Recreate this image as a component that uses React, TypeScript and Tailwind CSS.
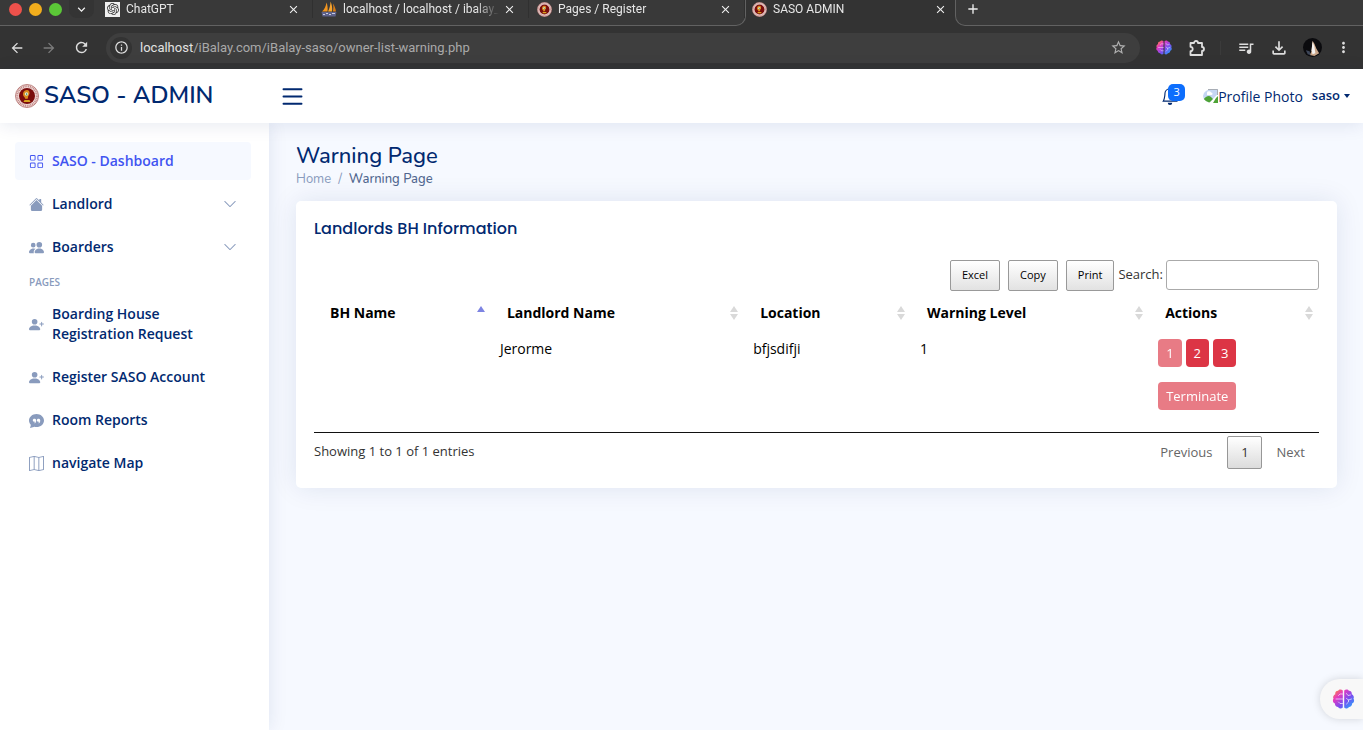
import React from "react";
import {
  BsBell,
  BsChatQuoteFill,
  BsChevronDown,
  BsGrid,
  BsHouseFill,
  BsList,
  BsMap,
  BsPeopleFill,
  BsPersonPlusFill,
} from "react-icons/bs";
import {
  MdAdd,
  MdArrowBack,
  MdArrowForward,
  MdClose,
  MdInfoOutline,
  MdKeyboardArrowDown,
  MdMoreVert,
  MdOutlineFileDownload,
  MdQueueMusic,
  MdRefresh,
  MdStarBorder,
} from "react-icons/md";
import { SiOpenai } from "react-icons/si";

function Seal({ className }: { className: string }) {
  return (
    <svg viewBox="0 0 48 48" className={className} aria-hidden="true">
      <circle cx="24" cy="24" r="23" fill="#f3dcda" stroke="#a8605d" strokeWidth="1.5" />
      <circle cx="24" cy="24" r="19.5" fill="none" stroke="#c08a88" strokeWidth="4" strokeDasharray="2 1.6" />
      <circle cx="24" cy="24" r="16" fill="#7a0c0c" />
      <path d="M20 13c5-3 10 0 9 6-1 5-4 5-3 10l-5 1c-1-4-5-5-5-9 0-4 1-6 4-8z" fill="#d98a1e" />
      <path d="M19 32h10l2 4H17z" fill="#d9a321" />
      <circle cx="23" cy="20" r="3.5" fill="#dfe9d8" />
      <path d="M22 18l3 2-2 3z" fill="#2f8a54" />
    </svg>
  );
}

function SailLogo() {
  return (
    <svg viewBox="0 0 16 16" className="size-4 shrink-0" aria-hidden="true">
      <path d="M5.500 1.500C6.500 4 7 7 6.500 10.500H1C3.500 8.500 5 5 5.500 1.500z" fill="#f0941f" />
      <path d="M9.500 0.500C11 4 11.500 7 11 10.500H7C8.500 7.500 9.500 4 9.500 0.500z" fill="#f7a52e" />
      <path d="M12 2.500c1.500 2 2.500 5 3 8h-3.200C12.500 8 12.500 5 12 2.500z" fill="#d97d16" />
      <path d="M0.500 11h15l-1 4.500h-13z" fill="#5d618a" />
      <path d="M2 13.500h2m1-1h2m1 1h2m1-1h3" stroke="#c9cbe0" strokeWidth="1" />
    </svg>
  );
}

function Puzzle() {
  return (
    <svg viewBox="0 0 18 18" className="size-[18px]" fill="none" stroke="currentColor" strokeWidth="1.8" strokeLinejoin="round" aria-hidden="true">
      <path d="M2.500 4H6a2 2 0 0 1 4 0h4v4a2 2 0 0 1 0 4v4H2.500v-3.800a2.200 2.200 0 0 0 0-4.400z" />
    </svg>
  );
}

function Brain({ id, className }: { id: string; className: string }) {
  return (
    <svg viewBox="0 0 22 20" className={className} aria-hidden="true">
      <defs>
        <linearGradient id={id} x1="0" y1="0" x2="1" y2="1">
          <stop offset="0" stopColor="#ff9a1f" />
          <stop offset="0.300" stopColor="#e63bc0" />
          <stop offset="0.600" stopColor="#7a4df0" />
          <stop offset="1" stopColor="#17b4ff" />
        </linearGradient>
      </defs>
      <path
        fill={`url(#${id})`}
        d="M10.300 1.500C9 0 6.500 0 5.600 1.700 3.600 1.700 2.300 3.500 2.800 5.200 1 6 0 8 1 9.600c-1.200 1.800-.6 4.200 1.400 5 0 2 1.400 3.400 3.200 3.400 1 1.800 3.400 2 4.700.5zM11.700 1.500C13 0 15.500 0 16.400 1.700c2 0 3.300 1.800 2.800 3.500C21 6 22 8 21 9.600c1.200 1.800.6 4.200-1.400 5 0 2-1.400 3.400-3.200 3.400-1 1.800-3.400 2-4.700.5z"
      />
      <path
        fill="none"
        stroke="#fff"
        strokeOpacity="0.700"
        strokeWidth="0.900"
        strokeLinecap="round"
        d="M10 5H7.500L6 6.500M10 10H3.500M10 14.500H7.500L6 13M14 4.500l1.500 2 2.500-.5M14 9.500l2 1.500 3-1M16 11v2l-2 2"
      />
    </svg>
  );
}

function BrokenImage() {
  return (
    <svg viewBox="0 0 15 14" className="h-[14px] w-[15px] shrink-0" aria-hidden="true">
      <defs>
        <clipPath id="avatar-round">
          <rect width="24" height="14" rx="10" ry="7" />
        </clipPath>
      </defs>
      <g clipPath="url(#avatar-round)">
        <path d="M0 0h15v5L6 14H0z" fill="#c5d6f3" />
        <path d="M0 11c3-4 6-5 8-3l2 2-4 4H0z" fill="#4ea336" />
        <path d="M4 4a2 1.500 0 0 1 4-.5 1.500 1.200 0 0 1 0 2.500H4z" fill="#fff" />
        <path d="M15 5l-8 9h8z" fill="#fff" />
        <path d="M13 9l2-2v7h-5z" fill="#4ea336" />
      </g>
      <path d="M5 .5h9.500V6" fill="none" stroke="#a8adb5" />
    </svg>
  );
}

type TabProps = { icon: React.ReactNode; title: string; active?: boolean };

function BrowserTab({ icon, title, active }: TabProps) {
  return (
    <div className={`flex h-[18px] w-[216px] min-w-0 items-center ${active ? "pr-2 pl-[6px]" : "border-r border-[#303030] pr-3 pl-2"}`}>
      {icon}
      <span className="ml-[6px] min-w-0 flex-1 mask-r-from-85% text-[12px] whitespace-nowrap text-[#e6e6e6]">{title}</span>
      <button type="button" aria-label={`Close ${title}`} className="ml-1 text-[#f0f0f0]">
        <MdClose size={13} />
      </button>
    </div>
  );
}

function Browser() {
  return (
    <div className="bg-[#333333] font-[Roboto,sans-serif]">
      <div className="flex h-[26px]">
        <div className="flex min-w-0 rounded-br-[10px] border-r border-b border-[#626262] bg-[#393939]">
          <div className="flex h-[18px] w-[97px] shrink-0 items-center gap-[7px] pl-[9px]">
            <span className="size-[13px] rounded-full bg-[#ed514b]" />
            <span className="size-[13px] rounded-full bg-[#f2ae1d]" />
            <span className="size-[13px] rounded-full bg-[#5bc837]" />
            <button type="button" aria-label="Search tabs" className="flex h-[18px] w-[25px] items-center justify-center rounded-b-lg bg-[#343434] text-[#f0f0f0]">
              <MdKeyboardArrowDown size={15} />
            </button>
          </div>
          <BrowserTab
            title="ChatGPT"
            icon={
              <span className="flex size-[15px] shrink-0 items-center justify-center bg-[#f0f0f0] text-[#333]">
                <SiOpenai size={12} />
              </span>
            }
          />
          <BrowserTab title="localhost / localhost / ibalay_" icon={<SailLogo />} />
          <BrowserTab title="Pages / Register" icon={<Seal className="size-[15px] shrink-0" />} />
        </div>
        <div className="flex w-[209px] shrink-0">
          <BrowserTab active title="SASO ADMIN" icon={<Seal className="size-[15px] shrink-0" />} />
        </div>
        <div className="flex-1 rounded-bl-[10px] border-b border-l border-[#626262] bg-[#393939]">
          <button type="button" aria-label="New tab" className="ml-[9px] flex h-[17px] items-center text-[#f0f0f0]">
            <MdAdd size={16} />
          </button>
        </div>
      </div>
      <div className="flex h-[43px] items-center pr-[11px] pl-2 text-[#dedede]">
        <button type="button" aria-label="Back" className="ml-px"><MdArrowBack size={16} /></button>
        <button type="button" aria-label="Forward" className="ml-4 text-[#7c7c7c]"><MdArrowForward size={16} /></button>
        <button type="button" aria-label="Reload" className="ml-4"><MdRefresh size={17} /></button>
        <div className="ml-4 flex h-[30px] flex-1 items-center rounded-full bg-[#3e3e3e] pr-[13px] pl-[4px]">
          <button type="button" aria-label="Site information" className="flex size-[22px] items-center justify-center rounded-full bg-[#333333]">
            <MdInfoOutline size={15} />
          </button>
          <div className="ml-2 flex-1 text-[13px] text-[#a9a9a9]">
            <span className="text-[#e2e2e2]">localhost</span>/iBalay.com/iBalay-saso/owner-list-warning.php
          </div>
          <button type="button" aria-label="Bookmark this page" className="text-[#b0b0b0]"><MdStarBorder size={17} /></button>
        </div>
        <div className="ml-4 flex items-center">
          <Brain id="brain-toolbar" className="h-[15px] w-4" />
          <button type="button" aria-label="Extensions" className="ml-4"><Puzzle /></button>
          <span className="ml-[14px] h-[14px] w-px bg-[#3b3b3b]" />
          <button type="button" aria-label="Media" className="ml-4"><MdQueueMusic size={18} /></button>
          <button type="button" aria-label="Downloads" className="ml-[14px]"><MdOutlineFileDownload size={20} /></button>
          <svg viewBox="0 0 20 20" className="ml-[14px] size-[19px]" aria-hidden="true">
            <circle cx="10" cy="10" r="10" fill="#0b0b0e" />
            <path d="M10 3l2 3 2 5 3 5-5 3-5-1 2-4z" fill="#c9a588" />
            <path d="M10 4l2 5 1 7-3 1-1-4z" fill="#f4f1ee" />
            <path d="M3 13l4 1 1 4-3-1z" fill="#3d4658" />
          </svg>
          <button type="button" aria-label="Menu" className="ml-[13px]"><MdMoreVert size={17} /></button>
        </div>
      </div>
    </div>
  );
}

function Header() {
  return (
    <header className="relative z-10 flex h-[54px] items-center bg-white pr-[13px] pl-[15px] text-[#012970] shadow-[0_2px_18px_rgba(1,41,112,0.1)]">
      <a href="#" className="flex w-[267px] items-center">
        <Seal className="size-6" />
        <span className="ml-[5px] pb-[2px] font-[Nunito,sans-serif] text-[24px] leading-7 font-semibold whitespace-nowrap">SASO - ADMIN</span>
      </a>
      <button type="button" aria-label="Toggle sidebar" className="-ml-[4px]"><BsList size={29} /></button>
      <div className="ml-auto flex items-center">
        <button type="button" aria-label="3 notifications" className="relative mr-6">
          <BsBell size={18} />
          <span className="absolute -top-[3px] left-[7px] flex h-[17px] w-[17px] items-center justify-center rounded-[5px] bg-[#0d6efd] text-[11px] text-white">3</span>
        </button>
        <button type="button" className="flex items-center">
          <BrokenImage />
          <span className="text-[14px]">Profile Photo</span>
          <span className="ml-[9px] text-[13px] font-semibold">saso</span>
          <span className="ml-1 border-x-[3px] border-t-[4px] border-x-transparent border-t-[#012970]" />
        </button>
      </div>
    </header>
  );
}

type NavProps = { icon: React.ReactNode; label: string; active?: boolean; expandable?: boolean };

function NavItem({ icon, label, active, expandable }: NavProps) {
  return (
    <li className="mb-[5px]">
      <a
        href="#"
        className={`flex min-h-[38px] items-center rounded-[4px] px-[14px] py-[9px] text-[14px] leading-5 font-semibold ${active ? "bg-[#f6f9ff] text-[#4154f1]" : "text-[#012970]"}`}
      >
        <span className={`mr-2 shrink-0 ${active ? "text-[#4154f1]" : "text-[#899bbd]"}`}>{icon}</span>
        <span className="max-w-[170px]">{label}</span>
        {expandable && <BsChevronDown size={14} className="ml-auto text-[#899bbd]" />}
      </a>
    </li>
  );
}

function Sidebar() {
  return (
    <aside className="w-[269px] shrink-0 bg-white pt-[19px] pr-[18px] pl-[15px] shadow-[0_0_18px_rgba(1,41,112,0.1)]">
      <nav>
        <ul>
          <NavItem active label="SASO - Dashboard" icon={<BsGrid size={15} />} />
          <NavItem expandable label="Landlord" icon={<BsHouseFill size={15} />} />
          <NavItem expandable label="Boarders" icon={<BsPeopleFill size={15} />} />
          <li className="mt-[10px] mb-[7px] pl-[14px] text-[10px] leading-3 font-semibold text-[#899bbd]">PAGES</li>
          <NavItem label="Boarding House Registration Request" icon={<BsPersonPlusFill size={15} />} />
          <NavItem label="Register SASO Account" icon={<BsPersonPlusFill size={15} />} />
          <NavItem label="Room Reports" icon={<BsChatQuoteFill size={15} />} />
          <NavItem label="navigate Map" icon={<BsMap size={15} />} />
        </ul>
      </nav>
    </aside>
  );
}

function SortArrows({ ascending }: { ascending?: boolean }) {
  return (
    <svg viewBox="0 0 8 14" className="h-[14px] w-2" aria-hidden="true">
      <path d="M4 0l4 6H0z" fill={ascending ? "#7d84e2" : "#d9d9d9"} />
      {!ascending && <path d="M4 14l4-6H0z" fill="#d9d9d9" />}
    </svg>
  );
}

const columns = [
  { name: "BH Name", width: "w-[17.6%]" },
  { name: "Landlord Name", width: "w-[25.2%]" },
  { name: "Location", width: "w-[16.6%]" },
  { name: "Warning Level", width: "w-[23.7%]" },
  { name: "Actions", width: "w-[16.9%]" },
];

const exportButton =
  "h-[31px] rounded-[2px] border border-[#999] bg-linear-to-b from-white to-[#e2e2e2] px-[11px] text-[11px] text-black";
const dangerButton =
  "h-7 rounded-[4px] bg-[#dc3545] px-2 pb-px text-[13px] text-white disabled:opacity-65";

function LandlordCard() {
  return (
    <section className="mt-3 rounded-[5px] bg-white px-[18px] pt-[18px] pb-[19px] shadow-[0_0_27px_rgba(1,41,112,0.1)]">
      <h2 className="font-[Poppins,sans-serif] text-[16px] leading-5 font-medium text-[#012970]">Landlords BH Information</h2>
      <div className="mt-[21px] flex items-start justify-end gap-2">
        <button type="button" className={exportButton}>Excel</button>
        <button type="button" className={exportButton}>Copy</button>
        <button type="button" className={exportButton}>Print</button>
        <div className="-ml-[4px] flex items-center gap-[3px]">
          <label htmlFor="search" className="text-[13px] text-[#333]">Search:</label>
          <input id="search" type="search" className="h-[30px] w-[153px] rounded-[3px] border border-[#aaa] px-[5px] text-[13px] outline-none" />
        </div>
      </div>
      <table className="mt-[5px] w-full table-fixed border-collapse border-b border-[#111] text-left text-[14px] leading-[22px] text-black">
        <thead>
          <tr>
            {columns.map((c, i) => (
              <th key={c.name} className={`pt-[6px] pr-[6px] pb-[7px] pl-4 font-bold ${c.width}`}>
                <div className="flex items-center justify-between">
                  {c.name}
                  <SortArrows ascending={i === 0} />
                </div>
              </th>
            ))}
          </tr>
        </thead>
        <tbody>
          <tr className="align-top">
            <td className="p-[7px]" />
            <td className="px-[9px] py-[7px]">Jerorme</td>
            <td className="px-[9px] py-[7px]">bfjsdifji</td>
            <td className="px-[9px] py-[7px]">1</td>
            <td className="px-[9px] pt-[8px] pb-[22px]">
              <div className="flex gap-1">
                <button type="button" disabled className={dangerButton}>1</button>
                <button type="button" className={dangerButton}>2</button>
                <button type="button" className={dangerButton}>3</button>
              </div>
              <div className="mt-[15px] flex">
                <button type="button" disabled className={dangerButton}>Terminate</button>
              </div>
            </td>
          </tr>
        </tbody>
      </table>
      <div className="mt-[3px] flex items-center justify-between text-[13px] text-[#333]">
        <div className="pb-[2px]">Showing 1 to 1 of 1 entries</div>
        <div className="flex items-center">
          <button type="button" disabled className="px-[15px] text-[#666]">Previous</button>
          <button type="button" className="h-[33px] w-[35px] rounded-[2px] border border-[#979797] bg-linear-to-b from-white to-[#dcdcdc]">1</button>
          <button type="button" disabled className="px-[14px] text-[#666]">Next</button>
        </div>
      </div>
    </section>
  );
}

export default function App() {
  return (
    <div className="flex min-h-screen flex-col bg-[#f6f9ff] font-['Open_Sans',sans-serif]">
      <Browser />
      <Header />
      <div className="flex flex-1">
        <Sidebar />
        <main className="min-w-0 flex-1 pt-[19px] pr-[26px] pl-[27px]">
          <h1 className="font-[Nunito,sans-serif] text-[22px] leading-7 font-medium text-[#012970]">Warning Page</h1>
          <nav aria-label="Breadcrumb" className="font-[Nunito,sans-serif] text-[13px] leading-[19px] text-[#899bbd]">
            <a href="#">Home</a>
            <span className="px-[7px]">/</span>
            <span className="font-medium text-[#51678f]">Warning Page</span>
          </nav>
          <LandlordCard />
        </main>
      </div>
      <button
        type="button"
        aria-label="Assistant"
        className="fixed right-0 bottom-[11px] z-20 flex h-10 w-[43px] items-center rounded-l-full bg-[#f8f8f8] pl-3 shadow-[0_0_8px_rgba(0,0,0,0.15)]"
      >
        <Brain id="brain-floating" className="h-5 w-[23px]" />
      </button>
    </div>
  );
}
